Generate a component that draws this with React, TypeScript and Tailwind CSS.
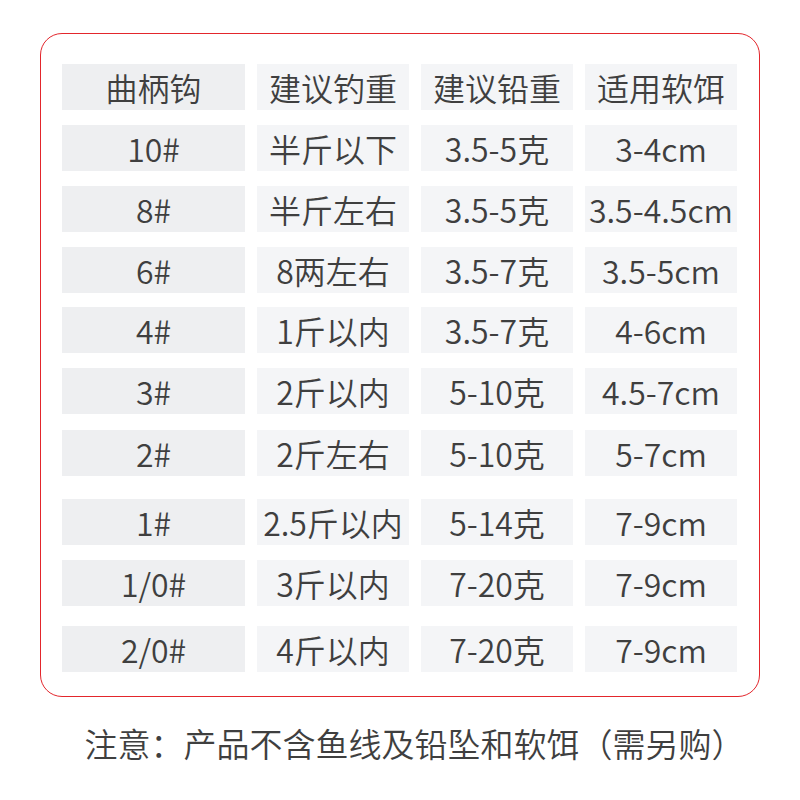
const rows: { cells: string[]; gap: string }[] = [
  { cells: ['曲柄钩', '建议钓重', '建议铅重', '适用软饵'], gap: 'mt-0' },
  { cells: ['10#', '半斤以下', '3.5-5克', '3-4cm'], gap: 'mt-[15px]' },
  { cells: ['8#', '半斤左右', '3.5-5克', '3.5-4.5cm'], gap: 'mt-[15px]' },
  { cells: ['6#', '8两左右', '3.5-7克', '3.5-5cm'], gap: 'mt-[15px]' },
  { cells: ['4#', '1斤以内', '3.5-7克', '4-6cm'], gap: 'mt-[14px]' },
  { cells: ['3#', '2斤以内', '5-10克', '4.5-7cm'], gap: 'mt-[15px]' },
  { cells: ['2#', '2斤左右', '5-10克', '5-7cm'], gap: 'mt-[16px]' },
  { cells: ['1#', '2.5斤以内', '5-14克', '7-9cm'], gap: 'mt-[23px]' },
  { cells: ['1/0#', '3斤以内', '7-20克', '7-9cm'], gap: 'mt-[15px]' },
  { cells: ['2/0#', '4斤以内', '7-20克', '7-9cm'], gap: 'mt-[20px]' },
];

export default function App() {
  return (
    <div
      className="w-[800px] h-[800px] bg-white text-[#3f3f3f] font-[350]"
      style={{ fontFamily: '"Noto Sans CJK SC", "Noto Sans", sans-serif' }}
    >
      <div className="pt-[33px] pl-[40px]">
        <div className="w-[720px] h-[664px] rounded-[22px] border border-[#e3262c] pt-[30px] pl-[21px]">
          {rows.map((row, i) => (
            <div key={i} className={`flex gap-[12px] ${row.gap}`}>
              {row.cells.map((c, j) => (
                <div
                  key={j}
                  className={`h-[46px] flex items-center justify-center whitespace-nowrap text-[32px] leading-none ${
                    j === 0 ? 'w-[183px] bg-[#eeeff1]' : 'w-[152px] bg-[#f4f5f7]'
                  }`}
                >
                  {c}
                </div>
              ))}
            </div>
          ))}
        </div>
      </div>
      <div className="mt-[30px] text-center text-[33px] leading-none pl-[29px]">
        注意：产品不含鱼线及铅坠和软饵（需另购）
      </div>
    </div>
  );
}
